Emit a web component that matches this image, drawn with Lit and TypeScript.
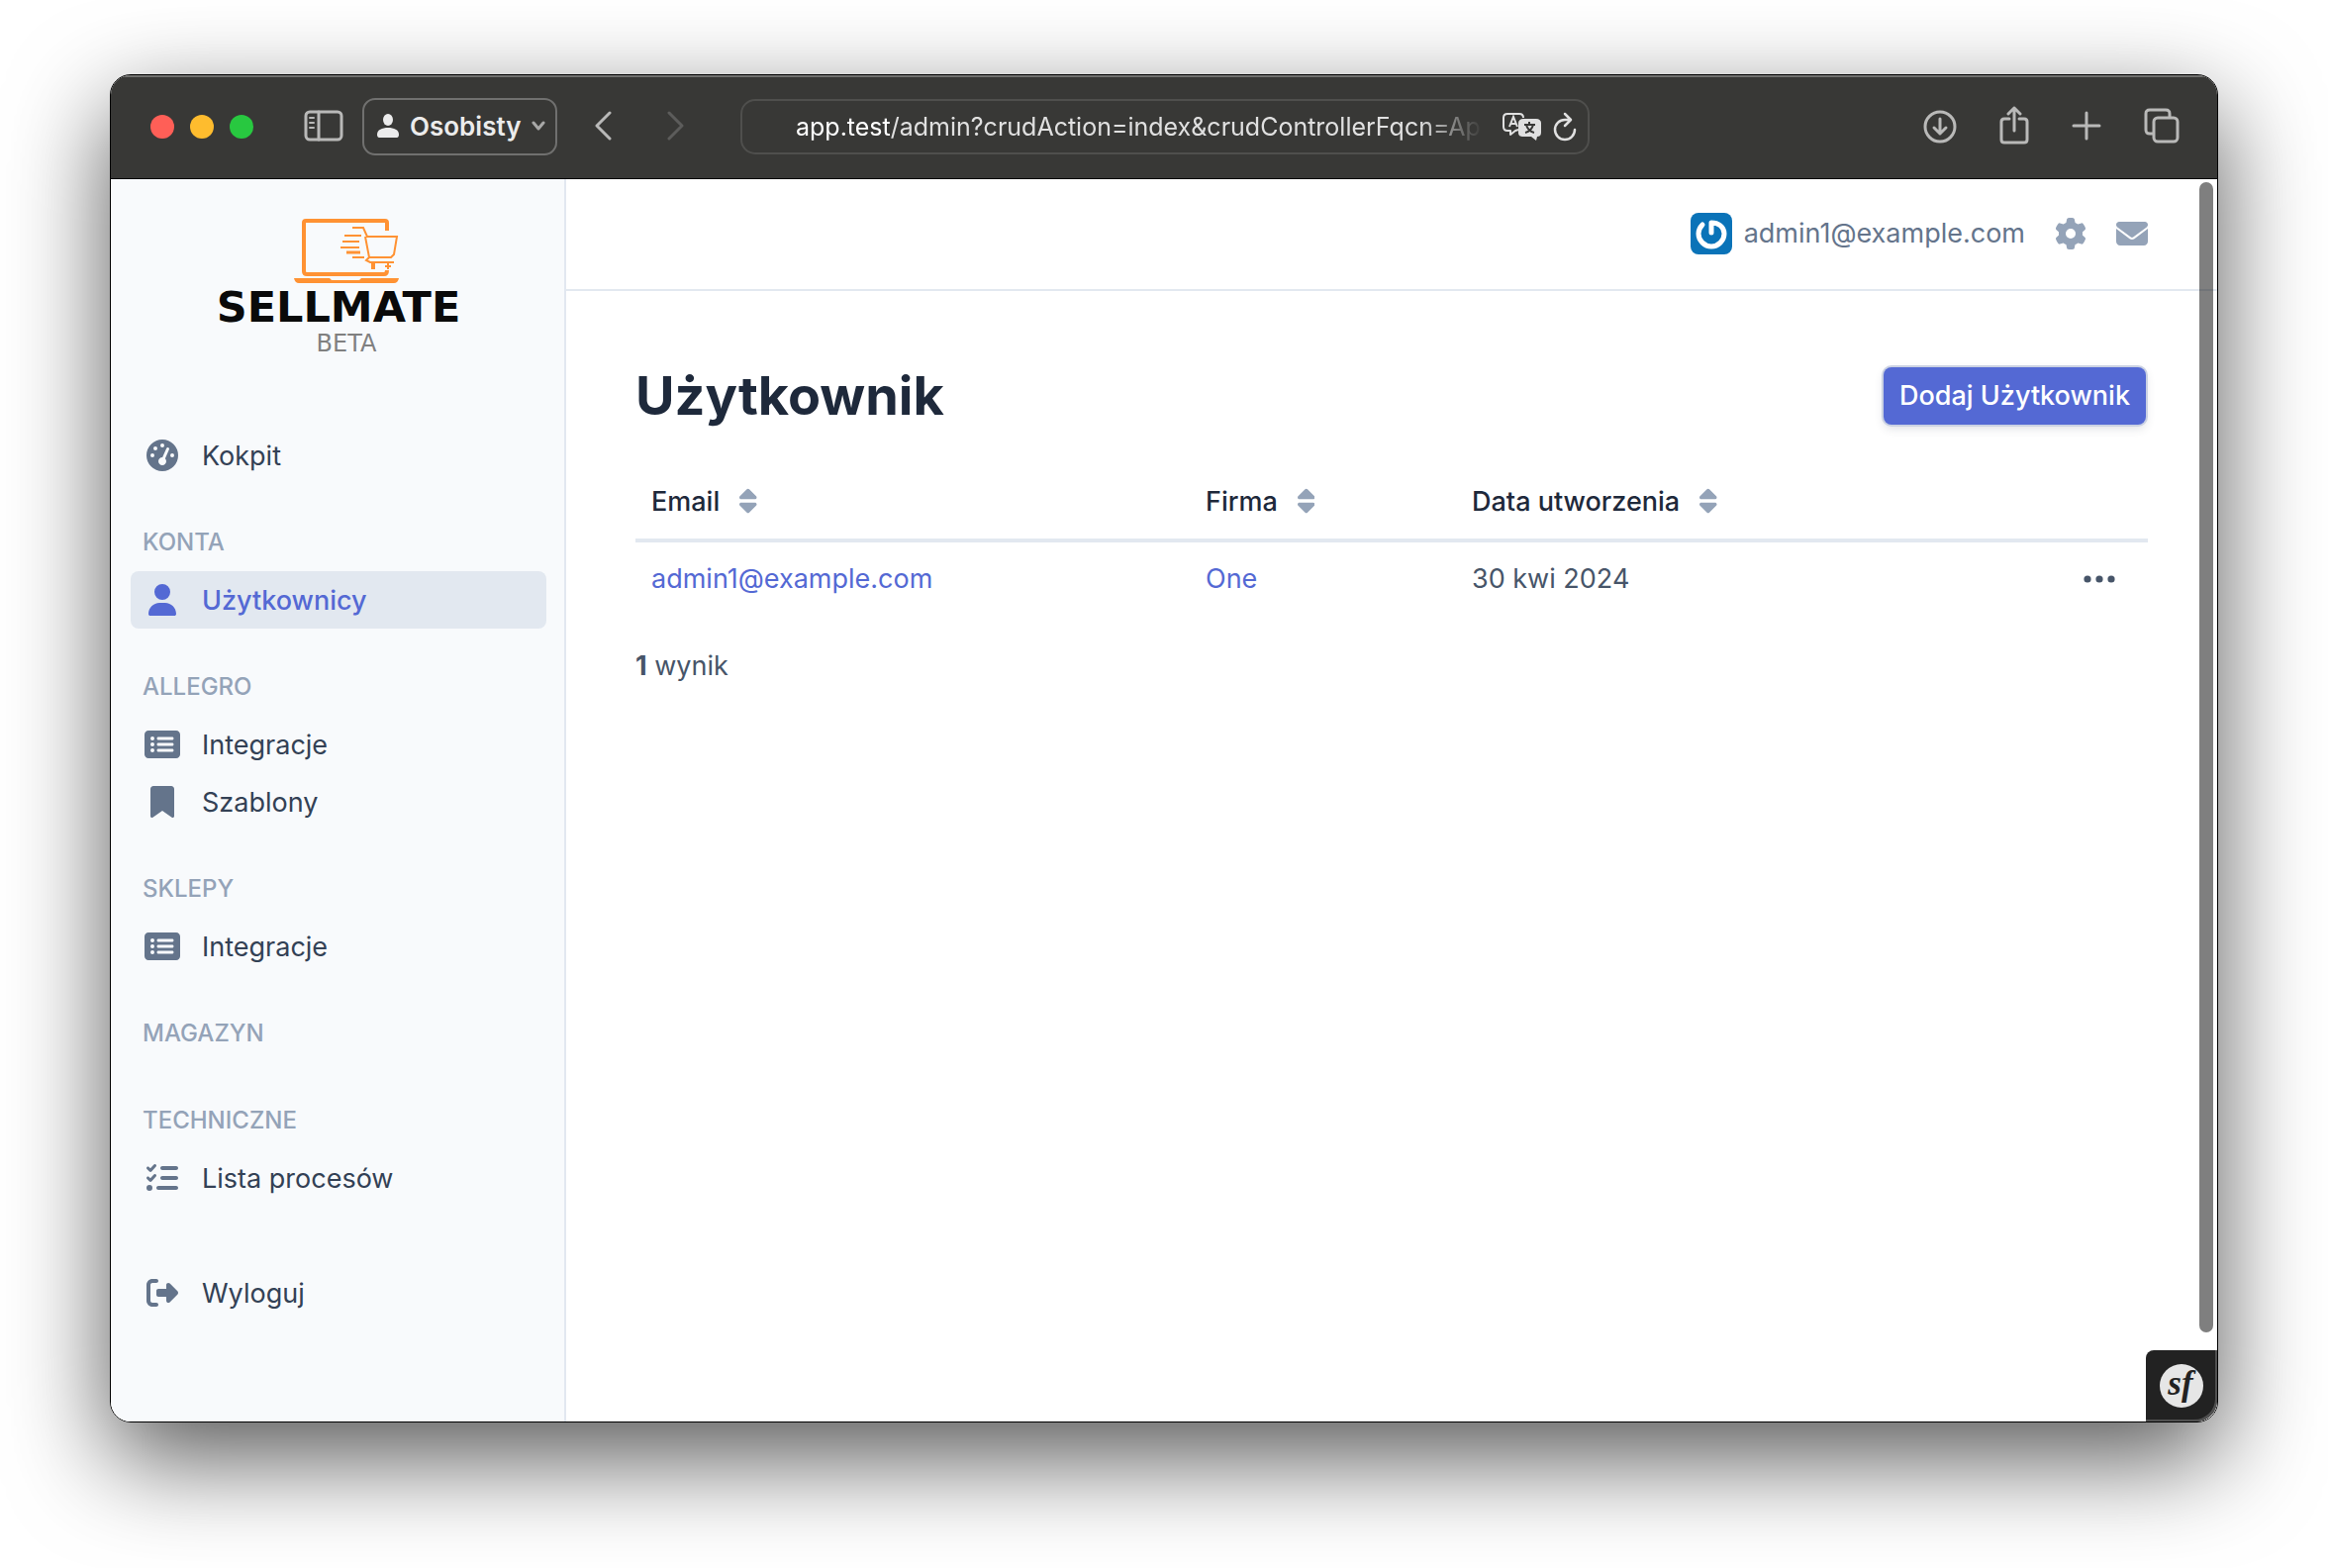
import { LitElement, html, css, svg, nothing, TemplateResult } from "lit";
import { customElement } from "lit/decorators.js";
import { classMap } from "lit/directives/class-map.js";

interface Glyph {
  w: number;
  d: string;
}

const glyphs: Record<string, Glyph> = {
  gauge: {
    w: 512,
    d: "M0 256a256 256 0 1 1 512 0A256 256 0 1 1 0 256zM288 96a32 32 0 1 0 -64 0 32 32 0 1 0 64 0zM256 416c35.3 0 64-28.7 64-64c0-17.4-6.9-33.1-18.1-44.6L366 161.7c5.3-12.1-.2-26.3-12.3-31.6s-26.3 .2-31.6 12.3L257.9 288c-.6 0-1.3 0-1.9 0c-35.3 0-64 28.7-64 64s28.7 64 64 64zM176 144a32 32 0 1 0 -64 0 32 32 0 1 0 64 0zM96 288a32 32 0 1 0 0-64 32 32 0 1 0 0 64zm352-32a32 32 0 1 0 -64 0 32 32 0 1 0 64 0z",
  },
  user: {
    w: 448,
    d: "M224 256A128 128 0 1 0 224 0a128 128 0 1 0 0 256zm-45.7 48C79.8 304 0 383.8 0 482.3C0 498.7 13.3 512 29.7 512H418.3c16.4 0 29.7-13.3 29.7-29.7C448 383.8 368.2 304 269.7 304H178.3z",
  },
  list: {
    w: 576,
    d: "M0 96C0 60.7 28.7 32 64 32H512c35.3 0 64 28.7 64 64V416c0 35.3-28.7 64-64 64H64c-35.3 0-64-28.7-64-64V96zM128 288a32 32 0 1 0 0-64 32 32 0 1 0 0 64zm32-128a32 32 0 1 0 -64 0 32 32 0 1 0 64 0zM128 384a32 32 0 1 0 0-64 32 32 0 1 0 0 64zm96-248c-13.3 0-24 10.7-24 24s10.7 24 24 24H448c13.3 0 24-10.7 24-24s-10.7-24-24-24H224zm0 96c-13.3 0-24 10.7-24 24s10.7 24 24 24H448c13.3 0 24-10.7 24-24s-10.7-24-24-24H224zm0 96c-13.3 0-24 10.7-24 24s10.7 24 24 24H448c13.3 0 24-10.7 24-24s-10.7-24-24-24H224z",
  },
  bookmark: {
    w: 384,
    d: "M0 48V487.7C0 501.1 10.9 512 24.3 512c5 0 9.9-1.5 14-4.4L192 400 345.7 507.6c4.1 2.9 9 4.4 14 4.4c13.4 0 24.3-10.9 24.3-24.3V48c0-26.5-21.5-48-48-48H48C21.5 0 0 21.5 0 48z",
  },
  tasks: {
    w: 512,
    d: "M152.1 38.2c9.9 8.9 10.7 24 1.8 33.9l-72 80c-4.4 4.9-10.6 7.8-17.2 7.9s-12.9-2.4-17.6-7L7 113C-2.3 103.6-2.3 88.4 7 79s24.6-9.4 33.9 0l22.1 22.1 55.1-61.2c8.9-9.9 24-10.7 33.9-1.8zm0 160c9.9 8.9 10.7 24 1.8 33.9l-72 80c-4.4 4.9-10.6 7.8-17.2 7.9s-12.9-2.4-17.6-7L7 273c-9.4-9.4-9.4-24.6 0-33.9s24.6-9.4 33.9 0l22.1 22.1 55.1-61.2c8.9-9.9 24-10.7 33.9-1.8zM224 96c0-17.7 14.3-32 32-32H480c17.7 0 32 14.3 32 32s-14.3 32-32 32H256c-17.7 0-32-14.3-32-32zm0 160c0-17.7 14.3-32 32-32H480c17.7 0 32 14.3 32 32s-14.3 32-32 32H256c-17.7 0-32-14.3-32-32zM160 416c0-17.7 14.3-32 32-32H480c17.7 0 32 14.3 32 32s-14.3 32-32 32H192c-17.7 0-32-14.3-32-32zM48 368a48 48 0 1 1 0 96 48 48 0 1 1 0-96z",
  },
  logout: {
    w: 512,
    d: "M377.9 105.9L500.7 228.7c7.2 7.2 11.3 17.1 11.3 27.3s-4.1 20.1-11.3 27.3L377.9 406.1c-6.4 6.4-15 9.9-24 9.9c-18.7 0-33.9-15.2-33.9-33.9l0-62.1-128 0c-17.7 0-32-14.3-32-32l0-64c0-17.7 14.3-32 32-32l128 0 0-62.1c0-18.7 15.2-33.9 33.9-33.9c9 0 17.6 3.6 24 9.9zM160 96L96 96c-17.7 0-32 14.3-32 32l0 256c0 17.7 14.3 32 32 32l64 0c17.7 0 32 14.3 32 32s-14.3 32-32 32l-64 0c-53 0-96-43-96-96L0 128C0 75 43 32 96 32l64 0c17.7 0 32 14.3 32 32s-14.3 32-32 32z",
  },
  gear: {
    w: 512,
    d: "M495.9 166.6c3.2 8.7 .5 18.4-6.4 24.6l-43.3 39.4c1.1 8.3 1.7 16.8 1.7 25.4s-.6 17.1-1.7 25.4l43.3 39.4c6.9 6.2 9.6 15.9 6.4 24.6c-4.4 11.9-9.7 23.3-15.8 34.3l-4.7 8.1c-6.6 11-14 21.4-22.1 31.2c-5.9 7.2-15.7 9.6-24.5 6.8l-55.7-17.7c-13.4 10.3-28.2 18.9-44 25.4l-12.5 57.1c-2 9.1-9 16.3-18.2 17.8c-13.8 2.3-28 3.5-42.5 3.5s-28.7-1.2-42.5-3.5c-9.2-1.5-16.2-8.7-18.2-17.8l-12.5-57.1c-15.8-6.5-30.6-15.1-44-25.4L83.1 425.9c-8.8 2.8-18.6 .3-24.5-6.8c-8.1-9.8-15.5-20.2-22.1-31.2l-4.7-8.1c-6.1-11-11.4-22.4-15.8-34.3c-3.2-8.7-.5-18.4 6.4-24.6l43.3-39.4C64.6 273.1 64 264.6 64 256s.6-17.1 1.7-25.4L22.4 191.2c-6.9-6.2-9.6-15.9-6.4-24.6c4.4-11.9 9.7-23.3 15.8-34.3l4.7-8.1c6.6-11 14-21.4 22.1-31.2c5.9-7.2 15.7-9.6 24.5-6.8l55.7 17.7c13.4-10.3 28.2-18.9 44-25.4l12.5-57.1c2-9.1 9-16.3 18.2-17.8C227.3 1.2 241.5 0 256 0s28.7 1.2 42.5 3.5c9.2 1.5 16.2 8.7 18.2 17.8l12.5 57.1c15.8 6.5 30.6 15.1 44 25.4l55.7-17.7c8.8-2.8 18.6-.3 24.5 6.8c8.1 9.8 15.5 20.2 22.1 31.2l4.7 8.1c6.1 11 11.4 22.4 15.8 34.3zM256 336a80 80 0 1 0 0-160 80 80 0 1 0 0 160z",
  },
  mail: {
    w: 512,
    d: "M48 64C21.5 64 0 85.5 0 112c0 15.1 7.1 29.3 19.2 38.4L236.8 313.6c11.4 8.5 27 8.5 38.4 0L492.8 150.4c12.1-9.1 19.2-23.3 19.2-38.4c0-26.5-21.5-48-48-48H48zM0 176V384c0 35.3 28.7 64 64 64H448c35.3 0 64-28.7 64-64V176L294.4 339.2c-22.8 17.1-54 17.1-76.8 0L0 176z",
  },
  sort: {
    w: 320,
    d: "M137.4 41.4c12.5-12.5 32.8-12.5 45.3 0l128 128c9.2 9.2 11.9 22.9 6.9 34.9s-16.6 19.8-29.6 19.8H32c-12.9 0-24.6-7.8-29.6-19.8s-2.2-25.7 6.9-34.9l128-128zm0 429.3l-128-128c-9.2-9.2-11.9-22.9-6.9-34.9s16.6-19.8 29.6-19.8H288c12.9 0 24.6 7.8 29.6 19.8s2.2 25.7-6.9 34.9l-128 128c-12.5 12.5-32.8 12.5-45.3 0z",
  },
};

const glyph = (name: string) => html`<svg
  class="glyph"
  viewBox="0 0 ${glyphs[name].w} 512"
  aria-hidden="true"
>
  <path d=${glyphs[name].d}></path>
</svg>`;

const line = (w: number, h: number, body: TemplateResult) => html`<svg
  class="line"
  width=${w}
  height=${h}
  viewBox="0 0 ${w} ${h}"
  aria-hidden="true"
>
  ${body}
</svg>`;

@customElement("browser-toolbar")
class BrowserToolbar extends LitElement {
  static styles = css`
    :host {
      display: flex;
      align-items: center;
      box-sizing: border-box;
      height: 105px;
      padding: 0 38px 0 40px;
      background: #383836;
      border-bottom: 1px solid #000;
      box-shadow: inset 0 2px 0 #70706e;
      color: #b9b9b8;
      font-family: Inter, "Liberation Sans", sans-serif;
    }
    button {
      display: flex;
      align-items: center;
      justify-content: center;
      padding: 0;
      border: 0;
      background: none;
      color: inherit;
      font: inherit;
    }
    .line {
      display: block;
      fill: none;
      stroke: currentColor;
      stroke-width: 3;
      stroke-linecap: round;
      stroke-linejoin: round;
    }
    .side {
      display: flex;
      flex: 1;
      align-items: center;
    }
    .lights {
      display: flex;
      gap: 16px;
      margin-right: 51px;
    }
    .light {
      width: 24px;
      height: 24px;
      border-radius: 50%;
    }
    .close {
      background: #ff5f57;
    }
    .minimize {
      background: #febc2e;
    }
    .zoom {
      background: #28c840;
    }
    .profile {
      box-sizing: border-box;
      height: 58px;
      margin: 0 36px 0 19px;
      padding: 0 10px 2px 13px;
      gap: 11px;
      border: 2px solid #70706f;
      border-radius: 13px;
      color: #ececec;
      font-size: 26px;
      font-weight: 600;
    }
    .person {
      display: block;
      fill: currentColor;
    }
    .profile .line {
      color: #a8a8a7;
    }
    .forward {
      margin-left: 54px;
      color: #5c5c5b;
    }
    .address {
      display: flex;
      align-items: center;
      box-sizing: border-box;
      width: 858px;
      height: 56px;
      padding: 0 11px 0 54px;
      gap: 12px;
      border: 2px solid #4f4f4d;
      border-radius: 15px;
      color: #e0e0e0;
    }
    .url {
      flex: 1;
      min-width: 0;
      overflow: hidden;
      font-size: 25px;
      white-space: nowrap;
      mask-image: linear-gradient(to right, #000 90%, transparent 99%);
    }
    .host {
      color: #fff;
    }
    .actions {
      justify-content: flex-end;
      gap: 43px;
    }
  `;

  render() {
    return html`
      <div class="side">
        <div class="lights">
          <button class="light close" aria-label="Zamknij"></button>
          <button class="light minimize" aria-label="Minimalizuj"></button>
          <button class="light zoom" aria-label="Powiększ"></button>
        </div>
        <button aria-label="Pasek boczny">
          ${line(
            40,
            34,
            svg`<rect x="2" y="2" width="36" height="28" rx="4"></rect>
              <path d="M15 2v28"></path>
              <path d="M6 8h4M6 13h4M6 18h4" stroke-width="2"></path>`
          )}
        </button>
        <button class="profile">
          <svg class="person" width="22" height="24" viewBox="0 0 22 24" aria-hidden="true">
            <ellipse cx="11" cy="6" rx="5" ry="6"></ellipse>
            <path d="M0 21c0-5 5-7 11-7s11 2 11 7c0 2-1 3-2 3H2c-1 0-2-1-2-3z"></path>
          </svg>
          <span>Osobisty</span>
          ${line(14, 10, svg`<path d="M2 2l5 6 5-6"></path>`)}
        </button>
        <button aria-label="Wstecz">
          ${line(20, 32, svg`<path d="M17 2L4 15l13 13"></path>`)}
        </button>
        <button class="forward" aria-label="Dalej">
          ${line(20, 32, svg`<path d="M3 2l13 13L3 28"></path>`)}
        </button>
      </div>
      <div class="address">
        <div class="url">
          <span class="host">app.test</span>/admin?crudAction=index&amp;crudControllerFqcn=Ap
        </div>
        <button aria-label="Przetłumacz">
          <svg width="40" height="30" viewBox="0 0 40 30" aria-hidden="true">
            <path
              d="M17 18l-3 1-5 4v-4H6c-3 0-4-1-4-4V6c0-3 1-4 4-4h12c3 0 4 1 4 4"
              fill="none"
              stroke="currentColor"
              stroke-width="2"
              stroke-linejoin="round"
            ></path>
            <path d="M8 15l4-10 4 10M9 12h6" fill="none" stroke="currentColor" stroke-width="2"></path>
            <path
              d="M22 7h13c3 0 5 2 5 4v10c0 3-2 4-4 4l-1 4-5-4h-8c-3 0-5-1-5-4V11c0-2 2-4 5-4z"
              fill="currentColor"
            ></path>
            <path
              d="M23 13h11M28 10v3M25 13c1 4 4 7 8 8M32 13c-1 4-4 7-8 8"
              fill="none"
              stroke="#383836"
              stroke-width="2"
            ></path>
          </svg>
        </button>
        <button aria-label="Odśwież">
          ${line(
            24,
            30,
            svg`<path d="M17 8h-5A10 10 0 1 0 22 18M12 2l6 6-6 6" stroke-width="2.5"></path>`
          )}
        </button>
      </div>
      <div class="side actions">
        <button aria-label="Pobrane">
          ${line(
            34,
            34,
            svg`<circle cx="17" cy="17" r="15"></circle>
              <path d="M17 9v15M11 18l6 6 6-6"></path>`
          )}
        </button>
        <button aria-label="Udostępnij">
          ${line(
            30,
            42,
            svg`<path d="M10 13H5c-2 0-3 1-3 3v18c0 2 1 3 3 3h20c2 0 3-1 3-3V16c0-2-1-3-3-3h-5M15 25V2M9 8l6-6 6 6"></path>`
          )}
        </button>
        <button aria-label="Nowa karta">
          ${line(30, 32, svg`<path d="M15 2v26M2 15h26"></path>`)}
        </button>
        <button aria-label="Karty">
          ${line(
            36,
            38,
            svg`<path d="M9 26H6c-3 0-4-1-4-4V6c0-3 1-4 4-4h16c3 0 4 1 4 4v3"></path>
              <rect x="10" y="10" width="24" height="24" rx="4"></rect>`
          )}
        </button>
      </div>
    `;
  }
}

interface NavItem {
  icon: string;
  label: string;
  active?: boolean;
}

interface NavSection {
  title?: string;
  items: NavItem[];
}

const sections: NavSection[] = [
  { items: [{ icon: "gauge", label: "Kokpit" }] },
  { title: "Konta", items: [{ icon: "user", label: "Użytkownicy", active: true }] },
  {
    title: "Allegro",
    items: [
      { icon: "list", label: "Integracje" },
      { icon: "bookmark", label: "Szablony" },
    ],
  },
  { title: "Sklepy", items: [{ icon: "list", label: "Integracje" }] },
  { title: "Magazyn", items: [] },
  { title: "Techniczne", items: [{ icon: "tasks", label: "Lista procesów" }] },
];

@customElement("side-menu")
class SideMenu extends LitElement {
  static styles = css`
    :host {
      display: block;
      box-sizing: border-box;
      padding: 38px 18px 36px 20px;
      background: #f8fafc;
      border-right: 2px solid #e2e8f0;
      color: #334155;
      font-family: Inter, "Liberation Sans", sans-serif;
      font-size: 27px;
    }
    .brand {
      display: flex;
      flex-direction: column;
      align-items: center;
      margin-bottom: 68px;
      color: #0a0a0a;
      font-family: "DejaVu Sans", sans-serif;
      text-decoration: none;
    }
    .art {
      display: block;
      margin-left: 16px;
    }
    .name {
      font-size: 43px;
      font-weight: 700;
      line-height: 42px;
    }
    .stage {
      margin-left: 16px;
      color: #808080;
      font-size: 24px;
      line-height: 32px;
    }
    ul {
      margin: 0;
      padding: 0;
      list-style: none;
    }
    h2 {
      box-sizing: border-box;
      height: 88px;
      margin: 0;
      padding: 44px 12px 0;
      color: #94a3b8;
      font-size: 24px;
      font-weight: 500;
      line-height: 30px;
      text-transform: uppercase;
    }
    .item {
      display: flex;
      align-items: center;
      height: 58px;
      padding: 0 12px;
      gap: 20px;
      border-radius: 8px;
      color: inherit;
      text-decoration: none;
    }
    .icon {
      display: flex;
      justify-content: center;
      width: 40px;
      color: #64748b;
    }
    .glyph {
      display: block;
      height: 32px;
      fill: currentColor;
    }
    .active {
      background: #e2e8f0;
      color: #5469d4;
      font-weight: 500;
    }
    .active .icon {
      color: inherit;
    }
    .leave {
      margin-top: 58px;
    }
  `;

  private item({ icon, label, active = false }: NavItem) {
    return html`<li>
      <a class=${classMap({ item: true, active })} href="#">
        <span class="icon">${glyph(icon)}</span>
        <span>${label}</span>
      </a>
    </li>`;
  }

  render() {
    return html`
      <a class="brand" href="#">
        <svg class="art" width="106" height="70" viewBox="0 0 106 70" fill="none" stroke="#ff9233" aria-hidden="true">
          <path d="M94 14V6q0-2-2-2H12q-2 0-2 2v49q0 3 3 3h78q3 0 3-4" stroke-width="4"></path>
          <path d="M0 62h36l2 2h28l2-2h38q-1 5-5 5H5q-4 0-5-5z" fill="#ff9233" stroke="none"></path>
          <path d="M59 11h11l4 9h30l-3 18-3 3H76l-4-21M76 41l-3 3 4 2h24" stroke-width="2"></path>
          <path d="M51 19h17M49 25h17M47 31h19M59 41h12" stroke-width="2"></path>
          <path d="M53 36h14" stroke-width="3"></path>
          <path d="M80 46v7" stroke-width="4"></path>
          <path d="M95 47v6M92 50h6" stroke-width="2"></path>
        </svg>
        <span class="name">SELLMATE</span>
        <span class="stage">BETA</span>
      </a>
      <nav aria-label="Menu główne">
        ${sections.map(
          (section) => html`
            ${section.title ? html`<h2>${section.title}</h2>` : nothing}
            <ul>
              ${section.items.map((item) => this.item(item))}
            </ul>
          `
        )}
        <ul class="leave">
          ${this.item({ icon: "logout", label: "Wyloguj" })}
        </ul>
      </nav>
    `;
  }
}

const columns = ["Email", "Firma", "Data utworzenia"];
const rows = [{ email: "admin1@example.com", company: "One", created: "30 kwi 2024" }];

@customElement("user-list")
class UserList extends LitElement {
  static styles = css`
    :host {
      display: block;
      min-width: 0;
      background: #fff;
      color: #475569;
      font-family: Inter, "Liberation Sans", sans-serif;
      font-size: 27px;
    }
    .glyph {
      display: block;
      height: 32px;
      fill: currentColor;
    }
    .account {
      display: flex;
      align-items: center;
      justify-content: flex-end;
      box-sizing: border-box;
      height: 113px;
      padding: 0 70px 2px;
      border-bottom: 2px solid #e2e8f0;
    }
    .account button {
      display: flex;
      align-items: center;
      padding: 0;
      border: 0;
      background: none;
      color: #94a3b8;
      font: inherit;
    }
    .account .user {
      gap: 12px;
      color: #64748b;
    }
    .account .settings,
    .account .messages {
      margin-left: 30px;
    }
    .avatar {
      display: block;
      border-radius: 8px;
    }
    .content {
      padding: 72px 70px;
    }
    .title {
      display: flex;
      align-items: center;
      justify-content: space-between;
      margin-bottom: 36px;
    }
    h1 {
      margin: 0;
      color: #1e293b;
      font-size: 54px;
      font-weight: 700;
      line-height: 68px;
    }
    .add {
      box-sizing: border-box;
      height: 58px;
      margin-right: 2px;
      padding: 0 16px;
      border-radius: 8px;
      background: #5469d4;
      box-shadow:
        0 0 0 2px #cbd2e3,
        0 4px 10px rgba(60, 66, 87, 0.16);
      color: #fff;
      font-weight: 500;
      line-height: 58px;
      text-decoration: none;
    }
    table {
      width: 100%;
      border-collapse: collapse;
      table-layout: fixed;
    }
    .email {
      width: 560px;
    }
    .company {
      width: 269px;
    }
    th,
    td {
      height: 72px;
      padding: 0 16px 2px;
      text-align: left;
    }
    th {
      border-bottom: 4px solid #e2e8f0;
      color: #1e293b;
      font-weight: 500;
    }
    .sort {
      display: flex;
      align-items: center;
      gap: 20px;
      color: inherit;
      text-decoration: none;
    }
    .sort .glyph {
      height: 28px;
      color: #94a3b8;
    }
    .link {
      color: #5469d4;
      text-decoration: none;
    }
    .menu {
      text-align: right;
    }
    .more {
      padding: 16px;
      border: 0;
      background: none;
      color: inherit;
    }
    .dots {
      display: block;
      fill: currentColor;
    }
    .count {
      margin: 0;
      padding: 32px 0;
      line-height: 38px;
    }
  `;

  render() {
    return html`
      <header class="account">
        <button class="user">
          <svg class="avatar" width="42" height="42" viewBox="0 0 42 42" aria-hidden="true">
            <rect width="42" height="42" fill="#0a73b8"></rect>
            <path
              d="M21 10v10M21 10c7 0 13 4 13 11s-6 13-13 13S8 28 8 21c0-4 2-7 4-9"
              fill="none"
              stroke="#fff"
              stroke-width="5"
              stroke-linecap="round"
            ></path>
          </svg>
          <span>admin1@example.com</span>
        </button>
        <button class="settings" aria-label="Ustawienia">${glyph("gear")}</button>
        <button class="messages" aria-label="Wiadomości">${glyph("mail")}</button>
      </header>
      <main class="content">
        <div class="title">
          <h1>Użytkownik</h1>
          <a class="add" href="#">Dodaj Użytkownik</a>
        </div>
        <table>
          <colgroup>
            <col class="email" />
            <col class="company" />
            <col />
            <col class="company" />
          </colgroup>
          <thead>
            <tr>
              ${columns.map(
                (name) => html`<th scope="col">
                  <a class="sort" href="#"><span>${name}</span>${glyph("sort")}</a>
                </th>`
              )}
              <th></th>
            </tr>
          </thead>
          <tbody>
            ${rows.map(
              (row) => html`<tr>
                <td><a class="link" href="#">${row.email}</a></td>
                <td><a class="link" href="#">${row.company}</a></td>
                <td>${row.created}</td>
                <td>
                  <div class="menu">
                    <button class="more" aria-label="Akcje">
                      <svg class="dots" width="34" height="10" viewBox="0 0 34 10" aria-hidden="true">
                        <circle cx="5" cy="6" r="3.6"></circle>
                        <circle cx="17" cy="6" r="3.6"></circle>
                        <circle cx="29" cy="6" r="3.6"></circle>
                      </svg>
                    </button>
                  </div>
                </td>
              </tr>`
            )}
          </tbody>
        </table>
        <p class="count"><strong>${rows.length}</strong> wynik</p>
      </main>
    `;
  }
}

@customElement("app-root")
class AppRoot extends LitElement {
  static styles = css`
    :host {
      display: flex;
      box-sizing: border-box;
      min-height: 100vh;
      padding: 75px 111px 147px;
      background: #fff;
    }
    .window {
      position: relative;
      display: flex;
      flex: 1;
      flex-direction: column;
      overflow: hidden;
      min-width: 0;
      border: 1px solid #000;
      border-radius: 21px;
      box-shadow: 0 36px 100px rgba(0, 0, 0, 0.66);
    }
    .page {
      display: grid;
      flex: 1;
      grid-template-columns: 460px 1fr;
    }
    .thumb {
      position: absolute;
      top: 108px;
      right: 4px;
      bottom: 90px;
      width: 14px;
      border-radius: 7px;
      background: #000;
      opacity: 0.5;
    }
    .debug {
      position: absolute;
      right: 0;
      bottom: 0;
      display: flex;
      align-items: center;
      justify-content: center;
      width: 72px;
      height: 72px;
      padding: 0;
      border: 0;
      border-radius: 8px 0 21px 0;
      background: #222;
      box-shadow: inset -2px -2px 0 #505050;
    }
    .logo {
      display: block;
      overflow: visible;
    }
    .mark {
      font-family: "Liberation Serif", serif;
      font-size: 35px;
      font-style: italic;
      font-weight: 700;
    }
  `;

  render() {
    return html`
      <div class="window">
        <browser-toolbar></browser-toolbar>
        <div class="page">
          <side-menu></side-menu>
          <user-list></user-list>
        </div>
        <div class="thumb"></div>
        <button class="debug" aria-label="Symfony">
          <svg class="logo" width="46" height="46" viewBox="0 0 46 46" aria-hidden="true">
            <circle cx="23" cy="23" r="22" fill="#e6e6e6"></circle>
            <text class="mark" x="22" y="32" text-anchor="middle" fill="#222">sf</text>
          </svg>
        </button>
      </div>
    `;
  }
}
